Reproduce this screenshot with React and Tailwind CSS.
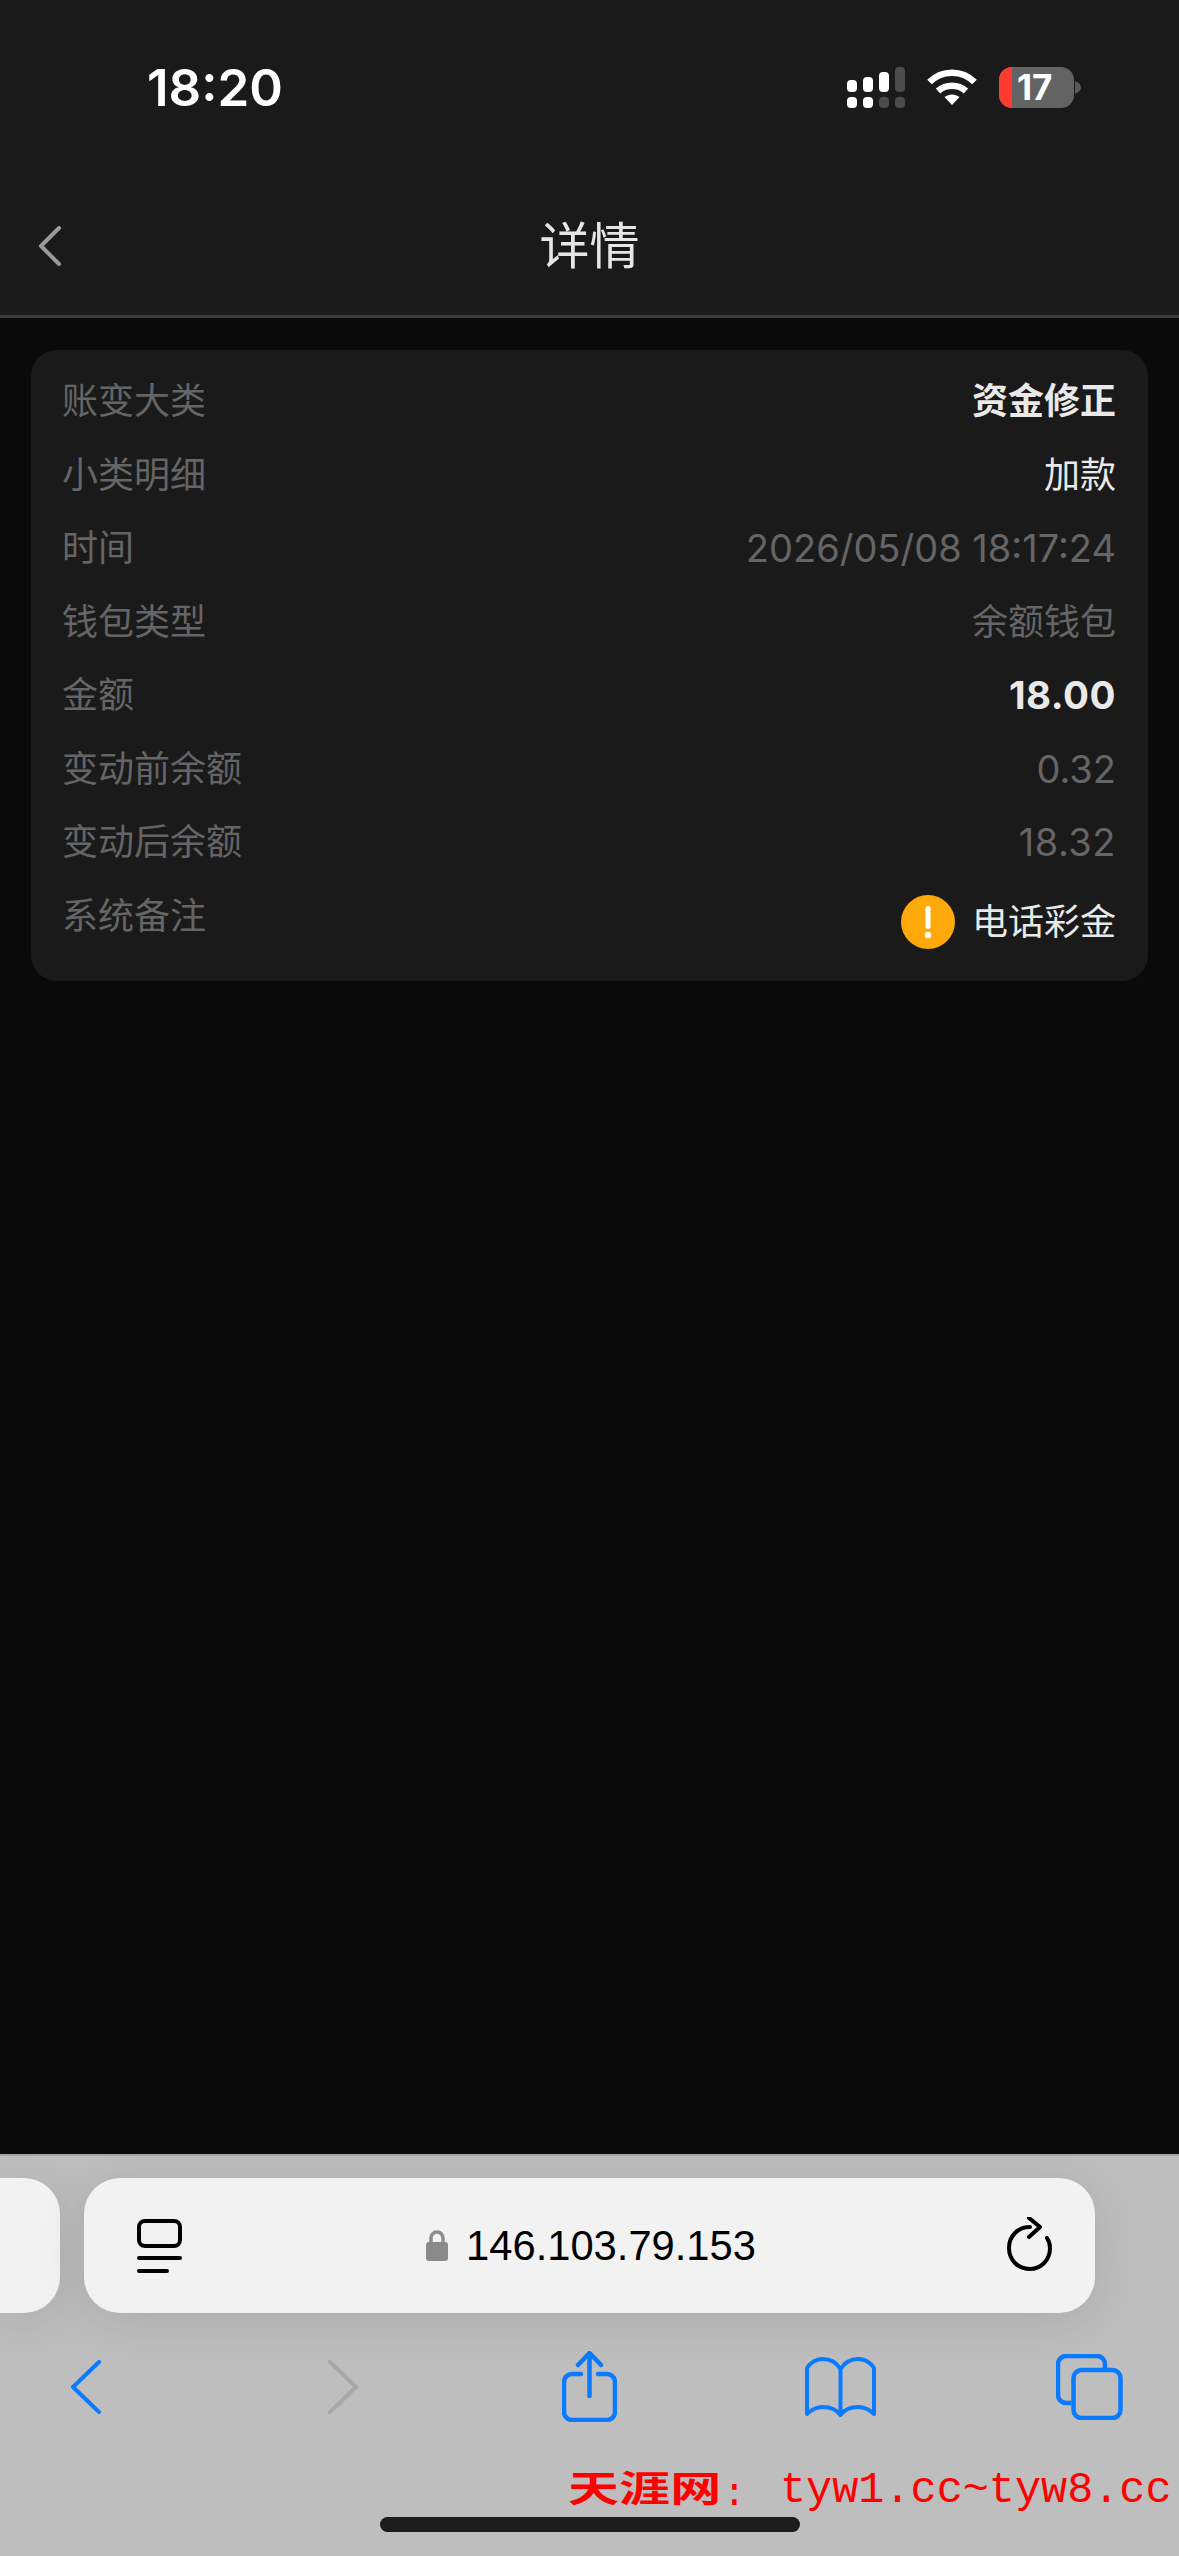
import React from "react";

const rows = [
  { label: "账变大类", value: "资金修正", cls: "text-[#e9e9e9] font-bold" },
  { label: "小类明细", value: "加款", cls: "text-[#e9e9e9]" },
  { label: "时间", value: "2026/05/08 18:17:24", cls: "text-[#656565] text-[38px]" },
  { label: "钱包类型", value: "余额钱包", cls: "text-[#656565]" },
  { label: "金额", value: "18.00", cls: "text-[#e9e9e9] font-bold text-[38.500px] tracking-[0.5px]" },
  { label: "变动前余额", value: "0.32", cls: "text-[#656565] text-[38px]" },
  { label: "变动后余额", value: "18.32", cls: "text-[#656565] text-[38px] tracking-[0.5px]" },
];

function Signal() {
  return (
    <svg width="58" height="41" viewBox="0 0 58 41">
      <rect x="0" y="13" width="10" height="12" rx="4" fill="#fff" />
      <rect x="16" y="10" width="10" height="15" rx="4" fill="#fff" />
      <rect x="32" y="5" width="10" height="20" rx="4" fill="#fff" />
      <rect x="48" y="0" width="10" height="25" rx="4" fill="#4c4c4c" />
      <rect x="0" y="30" width="10" height="11" rx="4" fill="#fff" />
      <rect x="16" y="30" width="10" height="11" rx="4" fill="#fff" />
      <rect x="32" y="30" width="10" height="11" rx="4" fill="#4c4c4c" />
      <rect x="48" y="30" width="10" height="11" rx="4" fill="#4c4c4c" />
    </svg>
  );
}

function Wifi() {
  return (
    <svg width="50" height="37" viewBox="0 0 50 37" fill="none" stroke="#fff" strokeWidth="6.5">
      <path d="M2.5 13 C15 0.5 35 0.5 47.500 13" />
      <path d="M11 22 C19 15 31 15 39 22" />
      <path d="M17.500 28 L25 36 L32.500 28 C28 24.500 22 24.500 17.500 28 Z" fill="#fff" stroke="none" />
    </svg>
  );
}

function Battery() {
  return (
    <div className="flex items-center">
      <div className="relative w-[75px] h-[41px] rounded-[13px] overflow-hidden bg-[#636363] flex items-center pl-[18px]">
        <div className="absolute left-0 top-0 bottom-0 w-[13px] bg-[#ff3b30]" />
        <span className="text-white text-[35px] leading-none font-bold font-['Inter',sans-serif]">17</span>
      </div>
      <svg className="ml-[1px]" width="6" height="13" viewBox="0 0 6 13">
        <path d="M0 0 C4 2 6 4 6 6.500 C6 9 4 11 0 13 Z" fill="#5a5a5a" />
      </svg>
    </div>
  );
}

export default function App() {
  return (
    <div className="w-[1179px] h-[2556px] flex flex-col bg-[#0a0a0a] overflow-hidden relative font-['Inter','Noto_Sans_CJK_SC',sans-serif]">
      {/* 顶部 */}
      <div className="bg-[#1a1a1a] border-b-[3px] border-[#3b3b3b] shrink-0">
        <div className="h-[174px] flex items-center justify-between pl-[147px] pr-[98px]">
          <span className="text-white text-[51px] font-semibold leading-none">18:20</span>
          <div className="flex items-center gap-[22px]">
            <Signal />
            <Wifi />
            <Battery />
          </div>
        </div>
        <div className="h-[141px] pb-[6px] relative flex items-center justify-center">
          <svg className="absolute left-[38px] top-[52px]" width="24" height="40" viewBox="0 0 24 40" fill="none" stroke="#9a9a9a" strokeWidth="4" strokeLinecap="round" strokeLinejoin="round">
            <path d="M21 2 L3 20 L21 38" />
          </svg>
          <span className="text-[#e6e6e6] text-[50px] leading-none font-['Noto_Sans_CJK_SC',sans-serif]">详情</span>
        </div>
      </div>

      {/* 卡片 */}
      <div className="shrink-0 mt-[32px] ml-[31px] w-[1117px] h-[631px] bg-[#1a1a1a] rounded-[26px] pl-[31px] pr-[32px] pt-[26px] flex flex-col gap-y-[23.5px] text-[36px] leading-[50px]">
        {rows.map((r) => (
          <div key={r.label} className="flex justify-between">
            <span className="text-[#656565]">{r.label}</span>
            <span className={r.cls}>{r.value}</span>
          </div>
        ))}
        <div className="flex justify-between">
          <span className="text-[#656565]">系统备注</span>
          <div className="mt-1 flex items-center gap-[17px] text-[#e9e9e9]">
            <svg width="54" height="54" viewBox="0 0 54 54">
              <circle cx="27" cy="27" r="27" fill="#ffa90a" />
              <rect x="24.500" y="11" width="5" height="23" rx="2.500" fill="#fff" />
              <circle cx="27" cy="40" r="3.200" fill="#fff" />
            </svg>
            <span>电话彩金</span>
          </div>
        </div>
      </div>

      <div className="flex-1" />

      {/* Safari 工具栏 */}
      <div className="shrink-0 h-[402px] bg-[#bebebe] border-t-2 border-[#a6a6a6] pt-[22px]">
        <div className="flex gap-[24px] h-[135px]">
          <div className="w-[60px] bg-[#f2f2f2] rounded-r-[36px] shadow-[0_8px_50px_rgba(0,0,0,0.1)]" />
          <div className="relative w-[1011px] bg-[#f2f2f2] rounded-[36px] shadow-[0_8px_50px_rgba(0,0,0,0.1)] flex items-center justify-center">
            <svg className="absolute left-[53px] top-[41px]" width="45" height="55" viewBox="0 0 45 55" fill="none" stroke="#000">
              <rect x="2" y="2" width="41" height="25" rx="6" strokeWidth="4" />
              <path d="M2 39 H43 M2 52 H30" strokeWidth="4" strokeLinecap="round" />
            </svg>
            <div className="flex items-center gap-[18px] pl-[3px]">
              <svg width="22" height="32" viewBox="0 0 22 32" fill="none">
                <path d="M5 14 V9 a6 6 0 0 1 12 0 V14" stroke="#8e8e8e" strokeWidth="3.500" />
                <rect x="0" y="13" width="22" height="19" rx="3" fill="#8a8a8a" />
              </svg>
              <span className="text-[41.700px] leading-none text-black font-['Liberation_Sans',sans-serif]">146.103.79.153</span>
            </div>
            <svg className="absolute left-[923px] top-[39px]" width="46" height="55" viewBox="0 0 46 55" fill="none" stroke="#000" strokeWidth="4" strokeLinecap="round" strokeLinejoin="round">
              <path d="M23 10 C11 10 2 19 2 31 C2 43 11 52 23 52 C34 52 43 43 43 31 C43 27 42 24 40 21" />
              <path d="M22 1 L33 10 L22 20" />
            </svg>
          </div>
        </div>

        <div className="flex items-center mt-[38px] h-[71px]">
          <svg className="ml-[71px]" width="30" height="54" viewBox="0 0 30 54" fill="none" stroke="#0a7aff" strokeWidth="4" strokeLinecap="round" strokeLinejoin="round">
            <path d="M28 2 L2 27 L28 52" />
          </svg>
          <svg className="ml-[227px]" width="30" height="54" viewBox="0 0 30 54" fill="none" stroke="#a8a8a8" strokeWidth="4" strokeLinecap="round" strokeLinejoin="round">
            <path d="M2 2 L28 27 L2 52" />
          </svg>
          <svg className="ml-[204px]" width="55" height="71" viewBox="0 0 55 71" fill="none" stroke="#0a7aff" strokeWidth="4.500" strokeLinecap="round" strokeLinejoin="round">
            <path d="M19 23 H10 a8 8 0 0 0 -8 8 V61 a8 8 0 0 0 8 8 H45 a8 8 0 0 0 8 -8 V31 a8 8 0 0 0 -8 -8 H36" />
            <path d="M27.500 45 V3 M16 14 L27.500 2 L39 14" />
          </svg>
          <svg className="ml-[188px]" width="71" height="60" viewBox="0 0 71 60" fill="none" stroke="#0a7aff" strokeWidth="4" strokeLinecap="round" strokeLinejoin="round">
            <path d="M35.500 12 C31 5 25 2 18 2 C11 2 6 5 2 11 V57 C6 53 11 50 18 50 C25 50 31 52 35.500 58 C40 52 46 50 53 50 C60 50 65 53 69 57 V11 C65 5 60 2 53 2 C46 2 40 5 35.500 12 V58" />
          </svg>
          <svg className="ml-[180px]" width="67" height="66" viewBox="0 0 67 66" fill="none" stroke="#0a7aff" strokeWidth="4.500">
            <path d="M15 49 H10 a8 8 0 0 1 -8 -8 V10 a8 8 0 0 1 8 -8 H41 a8 8 0 0 1 8 8 V14" />
            <rect x="17.500" y="16" width="47" height="48" rx="8" />
          </svg>
        </div>
      </div>

      {/* 水印 */}
      <div className="absolute left-[568px] top-[2464px] flex items-center text-[#ff0000] whitespace-nowrap">
        <span className="w-[153px] -mt-[8px] inline-block origin-left scale-x-[1.42] text-[36px] leading-[48px] font-bold font-['Noto_Sans_CJK_SC',sans-serif]">
          <span className="block w-[108px]">天涯网</span>
        </span>
        <span className="absolute left-[155px] top-[7px] text-[38px] leading-[48px] font-['Liberation_Mono',monospace]">:</span>
        <span className="ml-[59px] mt-[3px] text-[43.500px] leading-[48px] font-['Liberation_Mono',monospace]">tyw1.cc~tyw8.cc</span>
      </div>

      {/* Home 条 */}
      <div className="absolute left-[380px] top-[2517px] w-[420px] h-[15px] rounded-full bg-[#1c1c1c]" />
    </div>
  );
}
